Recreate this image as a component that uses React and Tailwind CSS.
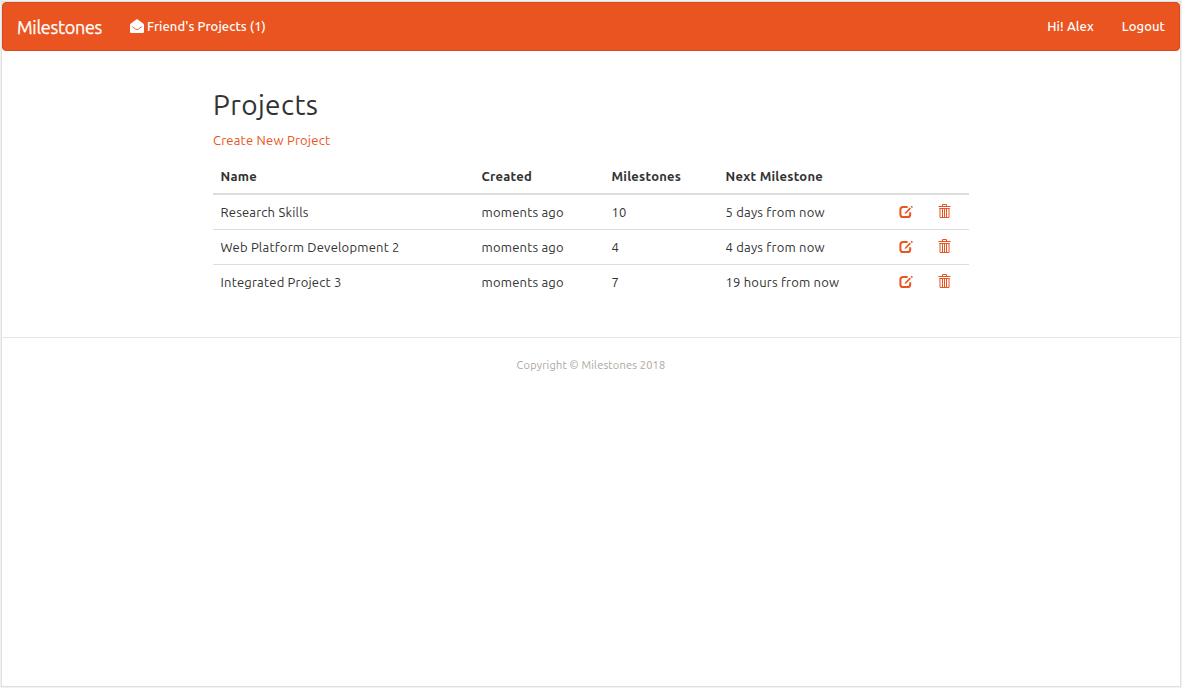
import React from "react";

const projects = [
  { name: "Research Skills", created: "moments ago", count: "10", next: "5 days from now" },
  { name: "Web Platform Development 2", created: "moments ago", count: "4", next: "4 days from now" },
  { name: "Integrated Project 3", created: "moments ago", count: "7", next: "19 hours from now" },
];

function EnvelopeIcon() {
  return (
    <svg viewBox="0 0 14 14" className="h-[14px] w-[14px] shrink-0" fill="currentColor">
      <path d="M7 0 L13.2 4.4 Q14 5 14 5.8 V12.8 Q14 14 12.8 14 H1.2 Q0 14 0 12.8 V5.8 Q0 5 .8 4.4 Z" />
      <path d="M2.2 7.6 L5.8 10.2 Q7 11 8.2 10.2 L11.8 7.6" fill="none" stroke="#e95420" strokeWidth="0.9" />
    </svg>
  );
}

function EditIcon() {
  return (
    <svg viewBox="0 0 14 13" className="h-[13px] w-[14px]" fill="currentColor">
      <path d="M8.6 2 H4 Q1.4 2 1.4 4.6 V9.4 Q1.4 12 4 12 H8.6 Q11.2 12 11.2 9.4 V7.2" fill="none" stroke="currentColor" strokeWidth="2" />
      <path d="M5.6 9 L6.2 7.2 L10.8 2.6 L12 3.8 L7.4 8.2 Z M11.6 1.7 L12.7 .7 L14 2 L12.9 3 Z" />
    </svg>
  );
}

function TrashIcon() {
  return (
    <svg viewBox="0 0 13 14" className="h-[14px] w-[13px]" fill="none" stroke="currentColor">
      <path d="M4.5 2 V.5 H8.5 V2" />
      <path d="M.5 2.5 H12.5" />
      <path d="M1.5 4.5 H11.5" />
      <path d="M2 4 V13.5 H11 V4" />
      <path d="M4.5 5 V13 M6.5 5 V13 M8.5 5 V13" />
    </svg>
  );
}

export default function App() {
  return (
    <div className="h-[688px] w-full bg-[#f1f1f1] p-[1px] font-['Ubuntu','Noto_Sans',sans-serif] text-[13px] leading-[18px] text-[#333333]">
      <div className="h-[686px] border border-[#e0e0e0] bg-white">
        <nav className="flex h-[49px] items-center rounded-[4px] border border-[#d9491a] bg-[#e95420] px-[14px] pb-[2px] text-white">
          <a className="w-[113px] pt-[2px] text-[18px] tracking-[-0.3px] [-webkit-text-stroke:0.25px_#ffffff]">Milestones</a>
          <a className="flex items-center gap-[3px] font-medium">
            <EnvelopeIcon />
            <span className="tracking-[0.07px]">Friend's Projects (1)</span>
          </a>
          <a className="ml-auto font-medium tracking-[0.1px]">Hi! Alex</a>
          <a className="ml-[28px] font-medium tracking-[0.1px]">Logout</a>
        </nav>
        <main className="ml-[211px] w-[756px] pt-[37px]">
          <h2 className="h-[33px] text-[28px] leading-[33px] tracking-[0.4px]">Projects</h2>
          <a className="mt-[10px] block tracking-[0.22px] text-[#e95420]">Create New Project</a>
          <table className="mt-[9px] w-full table-fixed border-collapse text-left tracking-[0.2px]">
            <colgroup>
              <col className="w-[261px]" />
              <col className="w-[130px]" />
              <col className="w-[114px]" />
              <col className="w-[173px]" />
              <col className="w-[39px]" />
              <col className="w-[39px]" />
            </colgroup>
            <thead>
              <tr className="h-[36px] border-b-2 border-[#dddddd] tracking-[0.25px]">
                <th className="pl-[7.5px] font-bold">Name</th>
                <th className="pl-[7.5px] font-bold">Created</th>
                <th className="pl-[7.5px] font-bold">Milestones</th>
                <th className="pl-[7.5px] font-bold">Next Milestone</th>
                <th />
                <th />
              </tr>
            </thead>
            <tbody>
              {projects.map((p) => (
                <tr key={p.name} className="h-[35px] border-b border-[#dddddd] last:border-b-0">
                  <td className="pl-[7.5px]">{p.name}</td>
                  <td className="pl-[7.5px]">{p.created}</td>
                  <td className="pl-[7.5px]">{p.count}</td>
                  <td className="pl-[7.5px]">{p.next}</td>
                  <td className="px-2 text-[#e95420]"><EditIcon /></td>
                  <td className="px-2 pb-[2px] text-[#e95420]"><TrashIcon /></td>
                </tr>
              ))}
            </tbody>
          </table>
        </main>
        <footer className="mt-[38px] border-t border-[#e7e7e7] pt-[18px] text-center text-[11px] tracking-[0.18px] text-[#aea79f]">
          Copyright © Milestones 2018
        </footer>
      </div>
    </div>
  );
}
